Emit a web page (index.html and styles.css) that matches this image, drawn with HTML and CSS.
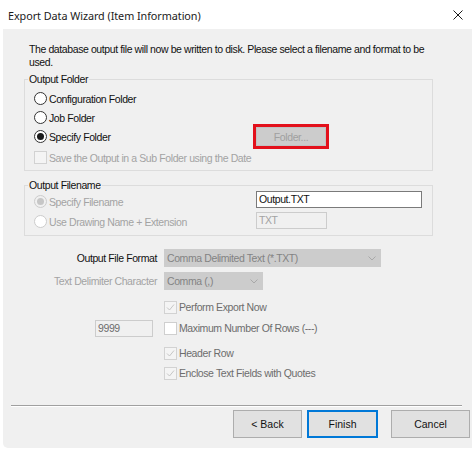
FILE: index.html
```html
<!DOCTYPE html>
<html>
<head>
<meta charset="utf-8">
<link rel="stylesheet" href="styles.css">
</head>
<body>
<div class="titlebar">
  <span class="title">Export Data Wizard (Item Information)</span>
  <svg class="close" width="10" height="10" viewBox="0 0 10 10"><path d="M0.5 0.5L9.5 9.5M9.5 0.5L0.5 9.5" stroke="#1a1a1a" stroke-width="1" fill="none"/></svg>
</div>
<div class="panel">
  <div class="content">
    <p class="intro">The database output file will now be written to disk. Please select a filename and format to be used.</p>

    <fieldset class="group group-folder">
      <legend>Output Folder</legend>
      <div class="row"><span class="radio"></span><span>Configuration Folder</span></div>
      <div class="row"><span class="radio"></span><span>Job Folder</span></div>
      <div class="row"><span class="radio on"></span><span class="label-wide">Specify Folder</span><span class="folder-btn">Folder...</span></div>
      <div class="row row-sub"><span class="check dis-box"></span><span class="dis">Save the Output in a Sub Folder using the Date</span></div>
    </fieldset>

    <fieldset class="group group-file">
      <legend>Output Filename</legend>
      <div class="frow"><span class="radio dis-on"></span><span class="label-file dis">Specify Filename</span><span class="textbox">Output.TXT</span></div>
      <div class="frow"><span class="radio dis-off"></span><span class="label-file dis">Use Drawing Name + Extension</span><span class="textbox ext">TXT</span></div>
    </fieldset>

    <div class="form">
      <div class="frm-row r-format">
        <span class="frm-label">Output File Format</span>
        <span class="combo combo-wide">Comma Delimited Text (*.TXT)<svg class="chev" width="8" height="5" viewBox="0 0 8 5"><path d="M0.5 0.5L4 4L7.5 0.5" stroke="#a8a8a8" fill="none"/></svg></span>
      </div>
      <div class="frm-row r-delim">
        <span class="frm-label dis">Text Delimiter Character</span>
        <span class="combo combo-small">Comma (,)<svg class="chev" width="8" height="5" viewBox="0 0 8 5"><path d="M0.5 0.5L4 4L7.5 0.5" stroke="#a8a8a8" fill="none"/></svg></span>
      </div>
      <div class="frm-row r-perform">
        <span class="frm-label"></span>
        <span class="check dis-box"><svg width="11" height="11" viewBox="0 0 11 11"><path d="M2 5.5L4.5 8L9 2.5" stroke="#c6c6c6" stroke-width="1" fill="none"/></svg></span><span class="opt">Perform Export Now</span>
      </div>
      <div class="frm-row r-max">
        <span class="frm-label"><span class="numbox">9999</span></span>
        <span class="check white-box"></span><span class="opt">Maximum Number Of Rows (---)</span>
      </div>
      <div class="frm-row r-header">
        <span class="frm-label"></span>
        <span class="check dis-box"><svg width="11" height="11" viewBox="0 0 11 11"><path d="M2 5.5L4.5 8L9 2.5" stroke="#c6c6c6" stroke-width="1" fill="none"/></svg></span><span class="opt">Header Row</span>
      </div>
      <div class="frm-row r-enclose">
        <span class="frm-label"></span>
        <span class="check dis-box"><svg width="11" height="11" viewBox="0 0 11 11"><path d="M2 5.5L4.5 8L9 2.5" stroke="#c6c6c6" stroke-width="1" fill="none"/></svg></span><span class="opt">Enclose Text Fields with Quotes</span>
      </div>
    </div>
  </div>

  <div class="footer">
    <div class="sep"></div>
    <div class="buttons">
      <span class="btn btn-back">&lt; Back</span>
      <span class="btn btn-finish">Finish</span>
      <span class="btn btn-cancel">Cancel</span>
    </div>
  </div>
</div>
</body>
</html>
```

FILE: styles.css
```css
html, body {
  margin: 0;
  padding: 0;
  background: #ffffff;
}
body {
  width: 474px;
  height: 449px;
  overflow: hidden;
  font-family: "Liberation Sans", Arial, sans-serif;
  font-size: 10.5px;
  letter-spacing: -0.4px;
  color: #111111;
}
.titlebar {
  height: 29px;
  display: flex;
  align-items: center;
  justify-content: space-between;
  padding: 0 11px 0 8px;
  box-sizing: border-box;
  background: #ffffff;
}
.title {
  font-family: "Noto Sans", "Liberation Sans", sans-serif;
  font-size: 10.8px;
  letter-spacing: -0.05px;
  color: #1a1a1a;
  margin-top: 1px;
}
.close {
  display: block;
  margin-top: 1px;
}
.panel {
  margin-left: 3px;
  width: 469px;
  height: 419px;
  background: #f0f0f0;
  border-bottom-left-radius: 5px;
  overflow: hidden;
}
.content {
  padding: 14px 0 0 21px;
}
.intro {
  margin: 0 0 0 5px;
  width: 405px;
  line-height: 13px;
}
.group {
  margin: 0;
  width: 409px;
  box-sizing: border-box;
  border: 1px solid #dcdcdc;
  padding: 0 0 3px 3px;
  min-width: 0;
}
.group legend {
  padding: 0 1px;
  line-height: 13px;
  color: #111111;
}
.group-folder {
  margin-top: 4px;
  padding-top: 3px;
}
.group-file {
  margin-top: 8px;
  padding-top: 0;
}
.row {
  display: flex;
  align-items: center;
  height: 19px;
  margin-left: 6px;
}
.row-sub {
  margin-top: 2px;
}
.radio {
  width: 13px;
  height: 13px;
  box-sizing: border-box;
  border: 1px solid #333333;
  border-radius: 50%;
  background: #ffffff;
  margin-right: 2px;
  flex: none;
  display: flex;
  align-items: center;
  justify-content: center;
}
.radio.on::after {
  content: "";
  width: 7px;
  height: 7px;
  border-radius: 50%;
  background: #1a1a1a;
}
.radio.dis-on {
  border-color: #cccccc;
  background: #f0f0f0;
}
.radio.dis-on::after {
  content: "";
  width: 7px;
  height: 7px;
  border-radius: 50%;
  background: #c6c6c6;
}
.radio.dis-off {
  border-color: #cccccc;
  background: #ffffff;
}
.label-wide {
  width: 204px;
  flex: none;
}
.folder-btn {
  width: 76px;
  height: 25px;
  margin: -3px 0 -3px 0;
  box-sizing: border-box;
  border: 3px solid #e3101b;
  background: #cccccc;
  box-shadow: inset 0 0 0 1px #c2c2c2;
  color: #a0a0a0;
  display: flex;
  align-items: center;
  justify-content: center;
  flex: none;
}
.check {
  width: 13px;
  height: 13px;
  box-sizing: border-box;
  margin-right: 2px;
  flex: none;
  display: flex;
  align-items: center;
  justify-content: center;
}
.check svg {
  display: block;
}
.dis-box {
  border: 1px solid #d2d2d2;
  background: #f4f4f4;
}
.white-box {
  border: 1px solid #cfcfcf;
  background: #ffffff;
}
.dis {
  color: #a3a3a3;
}
.frow {
  display: flex;
  align-items: flex-start;
  height: 20px;
  margin-left: 6px;
}
.frow .radio {
  margin-top: 3px;
}
.frow .label-file {
  width: 207px;
  flex: none;
  line-height: 20px;
}
.textbox {
  box-sizing: border-box;
  height: 17px;
  width: 166px;
  border: 1px solid #7a7a7a;
  background: #ffffff;
  padding-left: 2px;
  line-height: 15px;
  margin-top: -1px;
  color: #111111;
}
.textbox.ext {
  width: 71px;
  margin-top: 0;
  border-color: #cccccc;
  background: #f0f0f0;
  color: #a3a3a3;
}
.form {
  margin-top: 13px;
}
.frm-row {
  display: flex;
  align-items: center;
}
.frm-label {
  width: 133px;
  margin-right: 7px;
  text-align: right;
  flex: none;
  display: flex;
  justify-content: flex-end;
  align-items: center;
}
.r-format { height: 18px; }
.r-delim { height: 18px; margin-top: 5px; }
.r-perform { height: 20px; margin-top: 7px; }
.r-max { height: 20px; margin-top: 1px; }
.r-header { height: 20px; margin-top: 5px; }
.r-enclose { height: 20px; }
.combo {
  height: 18px;
  box-sizing: border-box;
  background: #cccccc;
  color: #838383;
  padding: 0 5px 0 3px;
  display: flex;
  align-items: center;
  justify-content: space-between;
}
.combo-wide { width: 217px; }
.combo-small { width: 99px; }
.chev { display: block; }
.opt {
  color: #6d6d6d;
}
.numbox {
  box-sizing: border-box;
  width: 58px;
  height: 17px;
  margin-right: 4px;
  border: 1px solid #cccccc;
  background: #f0f0f0;
  color: #6d6d6d;
  text-align: left;
  padding-left: 2px;
  line-height: 15px;
}
.footer {
  margin-top: 22px;
}
.sep {
  margin: 0 10px 0 8px;
  border-top: 1px solid #a0a0a0;
  border-bottom: 1px solid #ffffff;
}
.buttons {
  display: flex;
  justify-content: flex-end;
  padding-right: 2px;
  margin-top: 3px;
}
.btn {
  box-sizing: border-box;
  height: 28px;
  border: 1px solid #adadad;
  background: #e1e1e1;
  color: #111111;
  display: flex;
  align-items: center;
  justify-content: center;
  letter-spacing: 0;
}
.btn-back { width: 69px; }
.btn-finish {
  width: 71px;
  margin-left: 5px;
  border-color: #0078d7;
  box-shadow: inset 0 0 0 1px #0078d7;
}
.btn-cancel {
  width: 79px;
  margin-left: 13px;
}
```
